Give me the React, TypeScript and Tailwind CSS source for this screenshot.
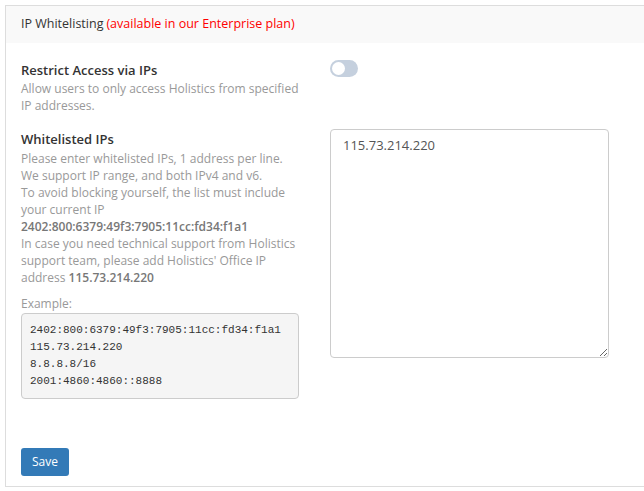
export default function App() {
  return (
    <div className="h-[491px] w-[644px] overflow-hidden bg-white pl-[5px] pt-[5px] font-['Open_Sans',sans-serif] text-[#333]">
      <div className="w-[700px] border border-[#ddd] bg-white">
        <div className="flex h-[37px] items-center bg-[#f9f9f9] px-[15px] text-[12.5px]">
          <span>IP Whitelisting</span>
          <span className="ml-[3px] text-[#f00]">(available in our Enterprise plan)</span>
        </div>

        <div className="px-[15px] pb-[10px] pt-[17px]">
          <div className="flex gap-[31px]">
            <div className="w-[278px]">
              <div className="text-[13px] font-semibold leading-[20px]">Restrict Access via IPs</div>
              <p className="text-[12px] leading-[17px] text-[#999]">
                Allow users to only access Holistics from specified IP addresses.
              </p>
            </div>
            <div>
              <div className="relative h-[17px] w-[28px] rounded-full bg-[#c5d0de]">
                <span className="absolute left-[2px] top-[2px] h-[13px] w-[13px] rounded-full bg-white" />
              </div>
            </div>
          </div>

          <div className="mt-[15px] flex gap-[31px]">
            <div className="w-[278px]">
              <div className="text-[13px] font-semibold leading-[20px]">Whitelisted IPs</div>
              <p className="mt-[1px] text-[12px] leading-[17px] text-[#999]">
                Please enter whitelisted IPs, 1 address per line.
                <br />
                We support IP range, and both IPv4 and v6.
                <br />
                To avoid blocking yourself, the list must include your current IP
                <br />
                <span className="font-semibold text-[#777]">2402:800:6379:49f3:7905:11cc:fd34:f1a1</span>
                <br />
                In case you need technical support from Holistics support team, please add Holistics' Office IP
                address <span className="font-semibold text-[#777]">115.73.214.220</span>
              </p>
              <div className="mt-[9px] text-[12px] leading-[17px] text-[#999]">Example:</div>
              <pre className="mt-[1px] rounded-[4px] border border-[#ccc] bg-[#f5f5f5] px-[8px] py-[8px] font-['Liberation_Mono',monospace] text-[11px] leading-[17px] text-[#333]">
                {'2402:800:6379:49f3:7905:11cc:fd34:f1a1\n115.73.214.220\n8.8.8.8/16\n2001:4860:4860::8888'}
              </pre>
            </div>
            <div>
              <textarea
                className="block h-[229px] w-[279px] rounded-[4px] border border-[#ccc] bg-white px-[12px] py-[5px] text-[13px] leading-[20px] text-[#555] outline-none"
                defaultValue="115.73.214.220"
              />
            </div>
          </div>

          <button className="mt-[49px] h-[28px] w-[48px] rounded-[3px] bg-[#337ab7] text-[12px] text-white">
            Save
          </button>
        </div>
      </div>
    </div>
  )
}
